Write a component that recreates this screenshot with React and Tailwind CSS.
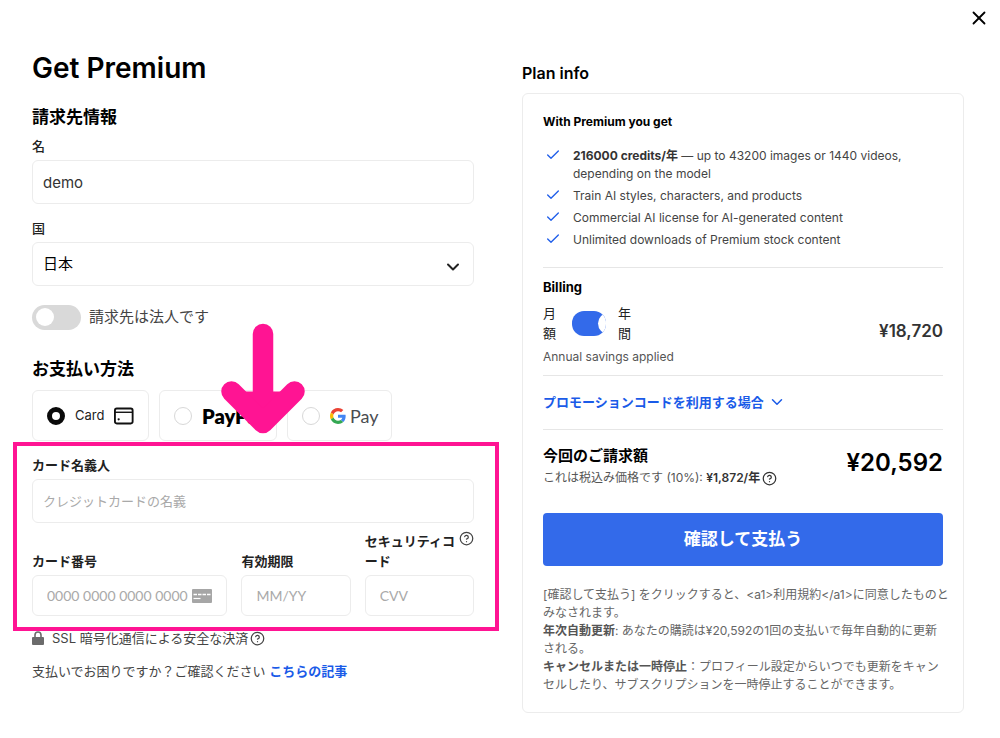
import { useState } from 'react';
import { X, ChevronDown, Check, CircleQuestionMark } from 'lucide-react';

const features = [
  { bold: '216000 credits/年', text: ' — up to 43200 images or 1440 videos, depending on the model' },
  { text: 'Train AI styles, characters, and products' },
  { text: 'Commercial AI license for AI-generated content' },
  { text: 'Unlimited downloads of Premium stock content' },
];

function CardIcon() {
  return (
    <svg className="w-[21px] h-[18px]" viewBox="0 0 21 18" fill="none" stroke="#111" strokeWidth="2" aria-hidden="true">
      <rect x="1" y="1" width="19" height="16" rx="2" />
      <path d="M1 5h19" strokeWidth="1.5" />
      <circle cx="5" cy="12.500" r="1.200" fill="#111" stroke="none" />
    </svg>
  );
}

function GoogleIcon() {
  return (
    <svg className="w-4 h-4" viewBox="0 0 48 48" aria-hidden="true">
      <path fill="#EA4335" d="M24 9.5c3.54 0 6.71 1.22 9.21 3.6l6.85-6.85C35.9 2.38 30.47 0 24 0 14.62 0 6.51 5.38 2.56 13.22l7.98 6.19C12.43 13.72 17.74 9.5 24 9.5z" />
      <path fill="#4285F4" d="M46.98 24.55c0-1.57-.15-3.09-.38-4.55H24v9.02h12.94c-.58 2.96-2.26 5.48-4.78 7.18l7.73 6c4.51-4.18 7.09-10.36 7.09-17.65z" />
      <path fill="#FBBC05" d="M10.53 28.59c-.48-1.45-.76-2.99-.76-4.59s.27-3.14.76-4.59l-7.98-6.19C.92 16.46 0 20.12 0 24c0 3.88.92 7.54 2.56 10.78l7.97-6.19z" />
      <path fill="#34A853" d="M24 48c6.48 0 11.93-2.13 15.89-5.81l-7.73-6c-2.15 1.45-4.92 2.3-8.16 2.3-6.26 0-11.57-4.22-13.47-9.91l-7.98 6.19C6.51 42.62 14.62 48 24 48z" />
    </svg>
  );
}

function CardNumberIcon() {
  return (
    <svg className="w-5 h-[14px] shrink-0" viewBox="0 0 20 14" aria-hidden="true">
      <rect width="20" height="14" rx="1" fill="#a6a6a6" />
      <path d="M1.500 5.500h3.500M6 5.500h3.500M10.500 5.500h3.500M15 5.500h3.500" stroke="#fff" strokeWidth="1.600" />
      <path d="M1.500 9.500h7" stroke="#fff" strokeWidth="1.200" />
    </svg>
  );
}

function LockIcon() {
  return (
    <svg className="w-3 h-[14px] mr-2 shrink-0" viewBox="0 0 12 14" aria-hidden="true">
      <path d="M3 7V4a3 3 0 0 1 6 0v3" fill="none" stroke="#6b6b6b" strokeWidth="1.600" />
      <rect y="6" width="12" height="8" rx="1" fill="#6b6b6b" />
    </svg>
  );
}

function PayOption({ id, value, onChange, children, className }) {
  return (
    <label className={`flex items-center gap-2.5 h-[51px] border border-[#ececec] rounded-md cursor-pointer ${className}`}>
      <input
        type="radio"
        name="method"
        value={id}
        checked={value === id}
        onChange={() => onChange(id)}
        className="appearance-none shrink-0 w-[18px] h-[18px] rounded-full border border-[#d8d8d8] bg-white checked:border-[5px] checked:border-[#0a0a0a]"
      />
      {children}
    </label>
  );
}

export default function App() {
  const [name, setName] = useState('demo');
  const [method, setMethod] = useState('card');

  const input = 'block w-full border border-[#ececec] rounded-md bg-white outline-none placeholder:text-[#a9a9a9] placeholder:opacity-100';

  return (
    <div className="relative min-h-screen bg-white text-[#333] font-['Inter','Noto_Sans_CJK_JP',sans-serif]">
      <button type="button" aria-label="Close" className="absolute top-[7px] right-2.5 text-black">
        <X size={22} strokeWidth={2} />
      </button>

      <main className="grid grid-cols-2 gap-12 pl-8 pr-9">
        <form id="checkout" className="pt-[50px]" onSubmit={(e) => e.preventDefault()}>
          <h1 className="text-[28px] leading-9 font-semibold text-black">Get Premium</h1>

          <h2 className="mt-[19px] text-[17px] leading-6 font-bold text-black">請求先情報</h2>
          <label htmlFor="name" className="block mt-[7px] text-[13px] leading-5 font-medium text-[#222]">名</label>
          <input id="name" className={`${input} mt-1 h-11 px-2.5 text-[15px]`} value={name} onChange={(e) => setName(e.target.value)} />

          <label htmlFor="country" className="block mt-3.5 text-[13px] leading-5 font-medium text-[#222]">国</label>
          <div className="relative mt-1">
            <select id="country" className={`${input} appearance-none h-11 px-2.5 text-[15px] text-black`}>
              <option>日本</option>
            </select>
            <ChevronDown size={20} strokeWidth={2.4} className="absolute right-[11px] top-[15px] text-[#222] pointer-events-none" />
          </div>

          <label className="flex items-center gap-2 mt-[18px] text-[15px] leading-[26px] text-[#444]">
            <input
              type="checkbox"
              className="appearance-none flex items-center w-[49px] h-[25px] px-1 rounded-full bg-[#d9d9d9] before:block before:w-[18px] before:h-[18px] before:rounded-full before:bg-white checked:bg-[#336aea] checked:justify-end"
            />
            請求先は法人です
          </label>

          <h2 className="mt-[27px] text-[17px] leading-6 font-bold text-black">お支払い方法</h2>
          <div className="relative flex gap-2.5 mt-[9px]">
            <PayOption id="card" value={method} onChange={setMethod} className="w-[117px] px-3.5">
              <span className="mr-auto text-[13px] text-[#222]">Card</span>
              <CardIcon />
            </PayOption>
            <PayOption id="paypal" value={method} onChange={setMethod} className="w-[118px] pl-3.5">
              <span className="text-xl leading-6 font-extrabold text-black font-['Lato','Open_Sans',sans-serif]">PayPal</span>
            </PayOption>
            <PayOption id="gpay" value={method} onChange={setMethod} className="w-[105px] pl-3.5">
              <span className="flex items-center gap-1 text-lg leading-6 text-[#4a4d51] font-['Lato',sans-serif]">
                <GoogleIcon />
                Pay
              </span>
            </PayOption>
            {/* Callout arrow to the card fields */}
            <svg className="absolute left-[189px] -top-[67px] w-[84px] h-[111px] pointer-events-none" viewBox="0 0 84 111" fill="none" stroke="#ff1493" strokeWidth="20.500" strokeLinecap="round" strokeLinejoin="round" aria-hidden="true">
              <path d="M42 11v88" />
              <path d="M10.500 68.500L42 100L73.500 68.500" fill="#ff1493" stroke="none" />
              <path d="M10.500 68.500L42 100L73.500 68.500" />
            </svg>
          </div>

          <div className="relative pt-3.5 pb-3">
            <div className="absolute top-px -left-[19px] -right-[25px] -bottom-[3px] border-4 border-[#ff1493] pointer-events-none" />
            <label htmlFor="holder" className="block text-[13px] leading-5 font-bold text-[#222]">カード名義人</label>
            <input id="holder" placeholder="クレジットカードの名義" className={`${input} mt-1 h-11 px-2.5 text-[13px]`} />

            <div className="grid grid-cols-[minmax(0,195fr)_minmax(0,109fr)_minmax(0,109fr)] gap-3.5 items-end mt-2">
              <div>
                <label htmlFor="number" className="block text-[13px] leading-5 font-bold text-[#222]">カード番号</label>
                <div className="flex items-center h-[41px] mt-1 px-3.5 border border-[#ececec] rounded-md">
                  <input id="number" placeholder="0000 0000 0000 0000" className="flex-1 min-w-0 outline-none text-sm font-['Lato',sans-serif] placeholder:text-[#a9a9a9] placeholder:opacity-100" />
                  <CardNumberIcon />
                </div>
              </div>
              <div>
                <label htmlFor="expiry" className="block text-[13px] leading-5 font-bold text-[#222]">有効期限</label>
                <input id="expiry" placeholder="MM/YY" className={`${input} mt-1 h-[41px] px-3.5 text-sm font-['Lato',sans-serif]`} />
              </div>
              <div>
                <div className="flex items-start justify-between">
                  <label htmlFor="cvv" className="w-[92px] text-[13px] leading-5 font-bold text-[#222] break-all">セキュリティコード</label>
                  <CircleQuestionMark size={15} className="text-[#444] shrink-0" />
                </div>
                <input id="cvv" placeholder="CVV" className={`${input} mt-1 h-[41px] px-3.5 text-sm font-['Lato',sans-serif]`} />
              </div>
            </div>
          </div>

          <p className="flex items-center text-[13px] leading-5 text-[#444]">
            <LockIcon />
            SSL 暗号化通信による安全な決済
            <CircleQuestionMark size={15} className="ml-0.5" />
          </p>
          <p className="mt-[13px] text-[13px] leading-5 text-[#444]">
            支払いでお困りですか？ご確認ください{' '}
            <a href="#help" className="font-bold text-[#1a5be8]">こちらの記事</a>
          </p>
        </form>

        <aside className="pt-[61px] pb-6">
          <h2 className="text-base leading-6 font-semibold text-black">Plan info</h2>
          <section className="mt-2 px-5 pt-[18px] pb-[18px] border border-[#ececec] rounded-md">
            <h3 className="text-xs leading-5 font-bold text-black">With Premium you get</h3>
            <ul className="flex flex-col gap-1 mt-[15px] pb-[18px] text-xs leading-[18px] text-[#444]">
              {features.map((f) => (
                <li key={f.text} className="flex gap-3 pl-0.5">
                  <Check size={16} strokeWidth={2} className="shrink-0 text-[#1f5eea]" />
                  <span>
                    {f.bold && <strong className="font-bold text-[#333]">{f.bold}</strong>}
                    {f.text}
                  </span>
                </li>
              ))}
            </ul>

            <div className="pt-[9px] pb-2 border-t border-[#e6e6e6]">
              <h3 className="text-[13px] leading-5 font-bold text-black">Billing</h3>
              <div className="flex items-center justify-between mt-1.5">
                <div>
                  <label className="flex items-center text-[13px] leading-5 text-[#222]">
                    <span className="w-[13px] break-all">月額</span>
                    <input
                      type="checkbox"
                      defaultChecked
                      className="appearance-none relative w-[34px] h-[25px] ml-4 rounded-[12px] bg-[#336aea] overflow-hidden after:absolute after:-right-[13px] after:top-0.5 after:w-[21px] after:h-[21px] after:rounded-full after:bg-white"
                    />
                    <span className="w-[13px] ml-3 break-all">年間</span>
                  </label>
                  <p className="mt-1 text-xs leading-5 text-[#555]">Annual savings applied</p>
                </div>
                <strong className="pb-2 text-[17px] leading-6 font-semibold text-[#333]">¥18,720</strong>
              </div>
            </div>

            <div className="pt-4 pb-[17px] border-y border-[#e6e6e6]">
              <button type="button" className="flex items-center gap-1 text-[13px] leading-5 font-bold text-[#1a5be8]">
                プロモーションコードを利用する場合
                <ChevronDown size={18} strokeWidth={2} />
              </button>
            </div>

            <div className="flex items-center justify-between mt-3.5">
              <div>
                <h3 className="text-[15px] leading-6 font-bold text-black">今回のご請求額</h3>
                <p className="flex items-center text-xs leading-5 text-[#555]">
                  これは税込み価格です (10%):&nbsp;<strong className="font-semibold text-[#333]">¥1,872/年</strong>
                  <CircleQuestionMark size={15} className="ml-0.5 text-[#333]" />
                </p>
              </div>
              <strong className="pb-1.5 text-2xl leading-8 font-semibold text-black">¥20,592</strong>
            </div>

            <button type="submit" form="checkout" className="block w-full h-[53px] mt-[25px] rounded bg-[#336aea] text-[17px] font-bold text-white">
              確認して支払う
            </button>

            <div className="mt-5 text-xs leading-[18px] text-[#666]">
              <p className="-mr-2">[確認して支払う] をクリックすると、&lt;a1&gt;利用規約&lt;/a1&gt;に同意したものとみなされます。</p>
              <p><strong className="font-bold text-[#555]">年次自動更新</strong>: あなたの購読は¥20,592の1回の支払いで毎年自動的に更新される。</p>
              <p><strong className="font-bold text-[#555]">キャンセルまたは一時停止</strong>：プロフィール設定からいつでも更新をキャンセルしたり、サブスクリプションを一時停止することができます。</p>
            </div>
          </section>
        </aside>
      </main>
    </div>
  );
}
